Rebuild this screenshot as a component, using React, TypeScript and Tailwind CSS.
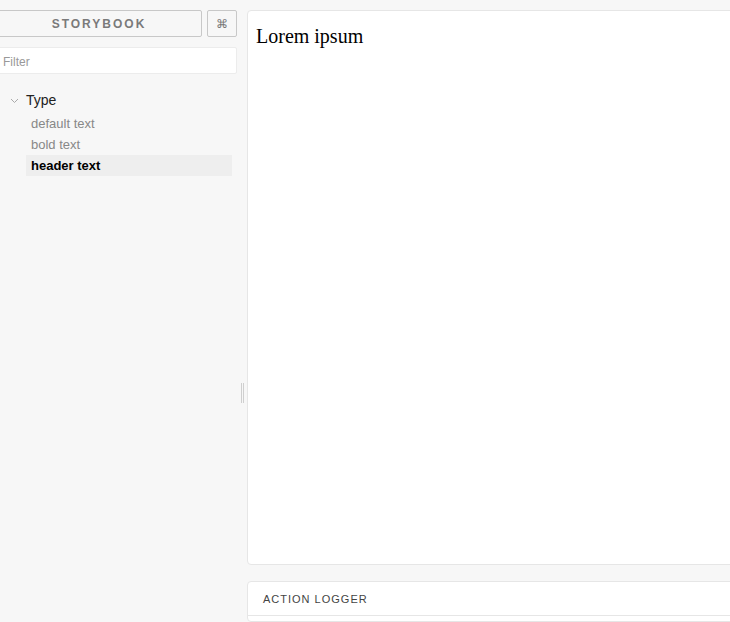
import React from "react";

export default function App() {
  const font = { fontFamily: '"Liberation Sans", Arial, sans-serif' };
  return (
    <div
      className="h-[622px] w-[730px] overflow-hidden bg-[#f7f7f7] flex"
      style={font}
    >
      {/* Sidebar */}
      <div className="w-[237px] shrink-0 pt-[10px] flex flex-col">
        <div className="flex gap-[5px] h-[27px] -ml-[4px]">
          <div className="flex-1 border border-[#c8c8c8] rounded-[2px] flex items-center justify-center text-[12px] font-bold tracking-[2px] text-[#7a7a7a]">
            STORYBOOK
          </div>
          <div className="w-[30px] border border-[#c8c8c8] rounded-[2px] flex items-center justify-center text-[12px] text-[#777]">
            ⌘
          </div>
        </div>
        <div className="mt-[10px] h-[27px] -ml-[4px] bg-white border border-[#ececec] rounded-[2px] flex items-center pl-[6px] pt-[2px] text-[12px] text-[#999]">
          Filter
        </div>
        <div className="mt-[16px] pl-[10px] flex items-center h-[20px]">
          <svg width="9" height="9" viewBox="0 0 9 9" className="mr-[7px]">
            <path d="M1 3 L4.5 6.5 L8 3" stroke="#aaa" strokeWidth="1" fill="none" />
          </svg>
          <span className="text-[14px] text-[#222]">Type</span>
        </div>
        <div className="pl-[26px] pr-[5px] mt-[3px] flex flex-col">
          <div className="h-[21px] flex items-center pl-[5px] text-[13px] text-[#888]">default text</div>
          <div className="h-[21px] flex items-center pl-[5px] text-[13px] text-[#888]">bold text</div>
          <div className="h-[21px] flex items-center pl-[5px] text-[13px] font-bold text-black bg-[#eeeeee]">header text</div>
        </div>
      </div>

      {/* Resize gutter */}
      <div className="w-[10px] shrink-0 pt-[383px]">
        <div className="flex gap-[1px] justify-center pl-[1px] h-[20px]">
          <div className="w-[1px] h-full bg-[#cfcfcf]" />
          <div className="w-[1px] h-full bg-[#cfcfcf]" />
        </div>
      </div>

      {/* Main */}
      <div className="flex-1 -mr-[10px] pt-[10px] flex flex-col gap-[16px]">
        <div className="h-[555px] bg-white border border-[#e6e6e6] rounded-[4px] px-[8px] pt-[13px]">
          <div
            className="text-[20px] text-black leading-[24px]"
            style={{ fontFamily: '"Liberation Serif", "Times New Roman", serif' }}
          >
            Lorem ipsum
          </div>
        </div>
        <div className="flex-1 bg-white border border-[#e6e6e6] rounded-[4px]">
          <div className="h-[34px] border-b border-[#e6e6e6] flex items-center pl-[15px] pt-[1px] text-[11px] tracking-[1px] text-[#444]">
            ACTION LOGGER
          </div>
        </div>
      </div>
    </div>
  );
}
